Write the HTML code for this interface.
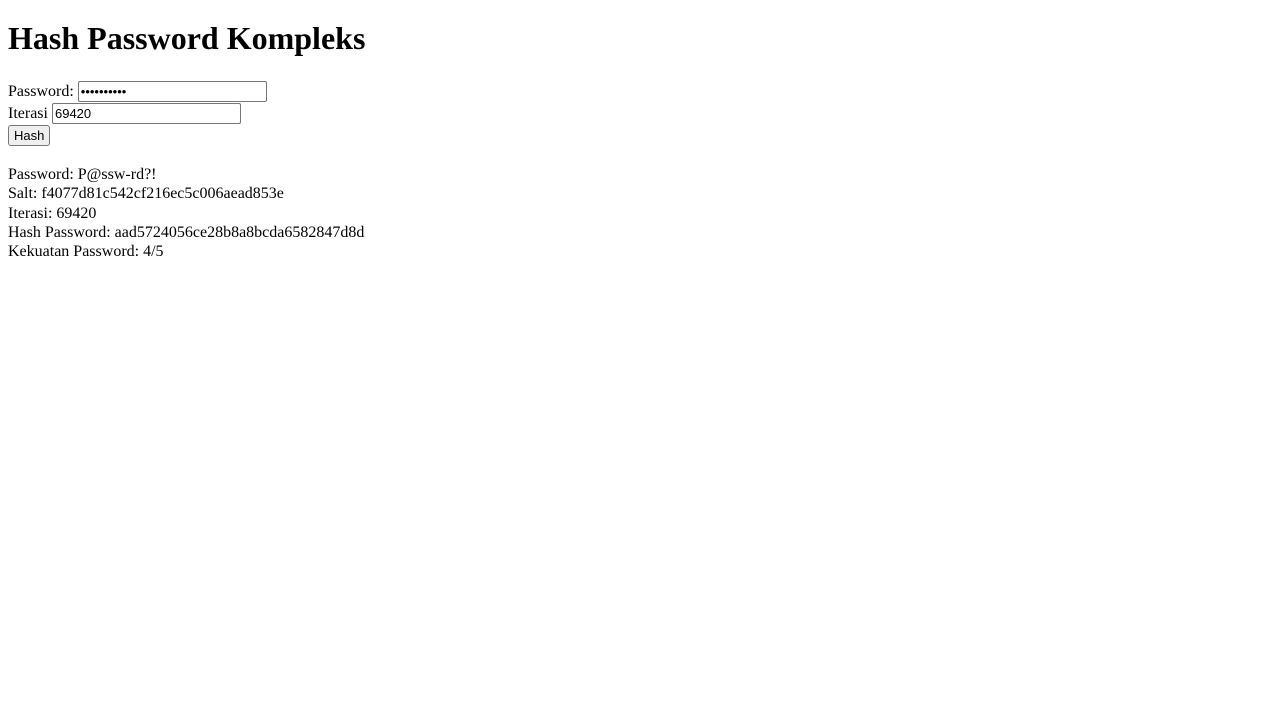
<!DOCTYPE html>
<html>
<head>
<meta charset="utf-8">
<style>
body{margin:8px;font-family:"Liberation Serif",serif;font-size:16px;color:#000;background:#fff;}
h1{font-size:32px;margin:20px 0 24px;line-height:37px;}
input{font-family:"Liberation Sans",sans-serif;font-size:13px;border:1px solid #767676;border-radius:2px;padding:1px 2px;height:17px;box-sizing:content-box;vertical-align:baseline;}
input[type=password]{width:183px;}
input[type=number]{width:183px;}
button{font-family:"Liberation Sans",sans-serif;font-size:13px;border:1px solid #767676;border-radius:3px;background:#efefef;padding:1px 5px;height:21px;}
p{margin:18px 0;line-height:19.3px;}
.f{line-height:22px;}
</style>
</head>
<body>
<h1>Hash Password Kompleks</h1>
<form class="f" onsubmit="return false">
<label>Password: </label><input type="password" value="P@ssw-rd?!"><br>
<label>Iterasi </label><input type="number" value="69420"><br>
<button>Hash</button>
</form>
<p>Password: P@ssw-rd?!<br>Salt: f4077d81c542cf216ec5c006aead853e<br>Iterasi: 69420<br>Hash Password: aad5724056ce28b8a8bcda6582847d8d<br>Kekuatan Password: 4/5</p>
</body>
</html>
